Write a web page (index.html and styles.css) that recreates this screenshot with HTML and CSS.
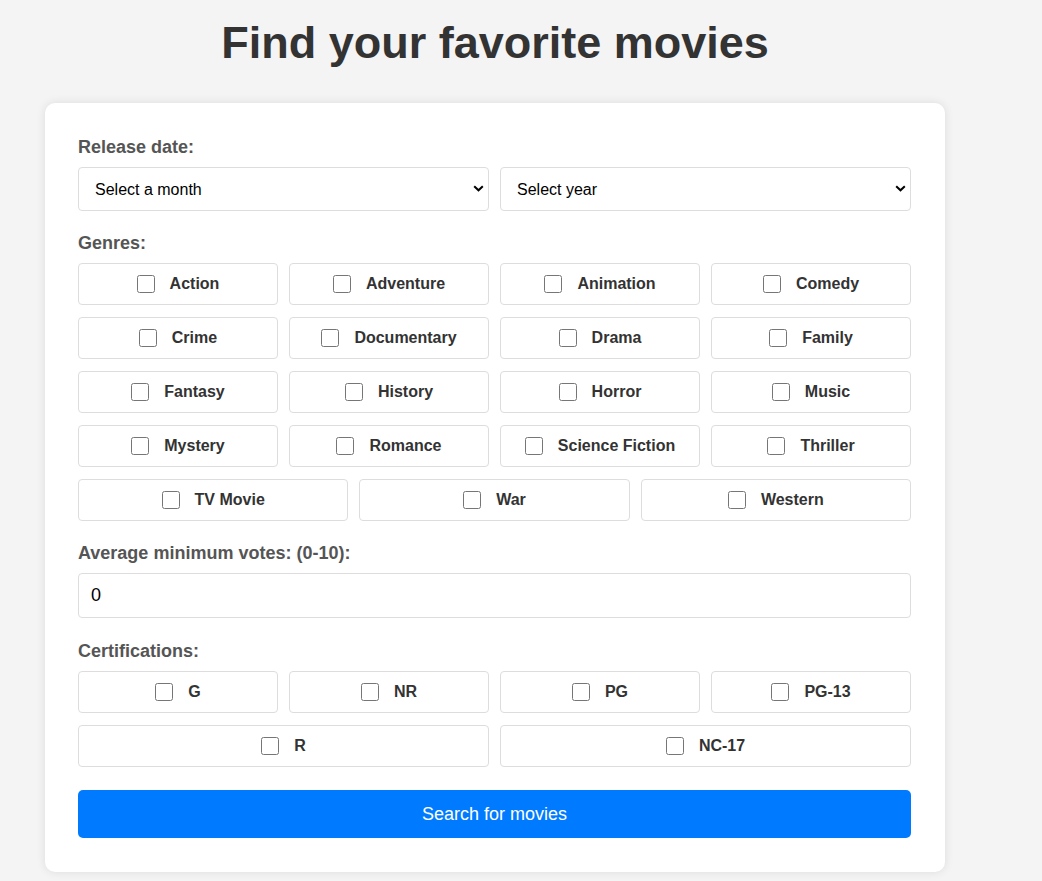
FILE: index.html
```html
<!DOCTYPE html>
<html lang="en">
<head>
<meta charset="utf-8">
<title>Find your favorite movies</title>
<link rel="stylesheet" href="styles.css">
</head>
<body>
<div class="page">
  <h1 class="title">Find your favorite movies</h1>
  <form class="card">
    <div class="section">
      <label class="field-label">Release date:</label>
      <div class="select-row">
        <div class="select-wrap">
          <select class="select"><option>Select a month</option></select>
          <svg class="chevron" viewBox="0 0 11 7"><path d="M1.2 1.2 L5.5 5.3 L9.8 1.2" fill="none" stroke="#000" stroke-width="2"/></svg>
        </div>
        <div class="select-wrap">
          <select class="select"><option>Select year</option></select>
          <svg class="chevron" viewBox="0 0 11 7"><path d="M1.2 1.2 L5.5 5.3 L9.8 1.2" fill="none" stroke="#000" stroke-width="2"/></svg>
        </div>
      </div>
    </div>

    <div class="section">
      <label class="field-label">Genres:</label>
      <div class="options">
        <label class="option"><input type="checkbox"><span>Action</span></label>
        <label class="option"><input type="checkbox"><span>Adventure</span></label>
        <label class="option"><input type="checkbox"><span>Animation</span></label>
        <label class="option"><input type="checkbox"><span>Comedy</span></label>
        <label class="option"><input type="checkbox"><span>Crime</span></label>
        <label class="option"><input type="checkbox"><span>Documentary</span></label>
        <label class="option"><input type="checkbox"><span>Drama</span></label>
        <label class="option"><input type="checkbox"><span>Family</span></label>
        <label class="option"><input type="checkbox"><span>Fantasy</span></label>
        <label class="option"><input type="checkbox"><span>History</span></label>
        <label class="option"><input type="checkbox"><span>Horror</span></label>
        <label class="option"><input type="checkbox"><span>Music</span></label>
        <label class="option"><input type="checkbox"><span>Mystery</span></label>
        <label class="option"><input type="checkbox"><span>Romance</span></label>
        <label class="option"><input type="checkbox"><span>Science Fiction</span></label>
        <label class="option"><input type="checkbox"><span>Thriller</span></label>
        <label class="option"><input type="checkbox"><span>TV Movie</span></label>
        <label class="option"><input type="checkbox"><span>War</span></label>
        <label class="option"><input type="checkbox"><span>Western</span></label>
      </div>
    </div>

    <div class="section section-input">
      <label class="field-label">Average minimum votes: (0-10):</label>
      <input class="number" type="number" value="0" min="0" max="10">
    </div>

    <div class="section section-last">
      <label class="field-label">Certifications:</label>
      <div class="options">
        <label class="option"><input type="checkbox"><span>G</span></label>
        <label class="option"><input type="checkbox"><span>NR</span></label>
        <label class="option"><input type="checkbox"><span>PG</span></label>
        <label class="option"><input type="checkbox"><span>PG-13</span></label>
        <label class="option"><input type="checkbox"><span>R</span></label>
        <label class="option"><input type="checkbox"><span>NC-17</span></label>
      </div>
    </div>

    <button class="submit" type="button">Search for movies</button>
  </form>
</div>
</body>
</html>
```

FILE: styles.css
```css
html, body {
  margin: 0;
  padding: 0;
}

body {
  background: #f4f4f4;
  font-family: "Liberation Sans", Arial, sans-serif;
}

.page {
  width: 990px;
  padding-bottom: 30px;
}

.title {
  margin: 17px 0 34px;
  font-size: 45px;
  line-height: 52px;
  font-weight: bold;
  color: #333;
  text-align: center;
}

.card {
  width: 900px;
  box-sizing: border-box;
  margin: 0 auto;
  background: #fff;
  border-radius: 10px;
  padding: 34px 34px 34px 33px;
  box-shadow: 0 0 10px rgba(0, 0, 0, 0.1);
}

.section {
  margin-bottom: 22px;
}

.section-input {
  margin-bottom: 23px;
}

.section-last {
  margin-bottom: 23px;
}

.field-label {
  display: block;
  font-size: 18px;
  line-height: 20px;
  font-weight: bold;
  color: #555;
  margin-bottom: 10px;
}

.select-row {
  display: flex;
  gap: 11px;
}

.select-wrap {
  position: relative;
  flex: 1 1 0;
}

.select {
  display: block;
  width: 100%;
  height: 44px;
  box-sizing: border-box;
  -webkit-appearance: none;
  appearance: none;
  border: 1px solid #ddd;
  border-radius: 4px;
  padding: 0 16px;
  background: #fff;
  color: #000;
  font-family: "Liberation Sans", Arial, sans-serif;
  font-size: 16px;
}

.chevron {
  position: absolute;
  right: 5px;
  top: 18px;
  width: 11px;
  height: 7px;
  pointer-events: none;
}

.options {
  display: flex;
  flex-wrap: wrap;
  gap: 12px 11px;
}

.option {
  flex: 1 1 180px;
  height: 42px;
  box-sizing: border-box;
  border: 1px solid #ddd;
  border-radius: 4px;
  background: #fff;
  display: flex;
  align-items: center;
  justify-content: center;
  font-size: 16px;
  font-weight: bold;
  color: #333;
}

.option input {
  width: 18px;
  height: 18px;
  margin: 0 15px 0 0;
}

.number {
  display: block;
  width: 100%;
  height: 45px;
  box-sizing: border-box;
  border: 1px solid #ddd;
  border-radius: 4px;
  padding: 0 12px;
  background: #fff;
  color: #000;
  font-family: "Liberation Sans", Arial, sans-serif;
  font-size: 18px;
}

.number::-webkit-inner-spin-button,
.number::-webkit-outer-spin-button {
  -webkit-appearance: none;
  margin: 0;
}

.submit {
  display: block;
  width: 100%;
  height: 48px;
  border: none;
  border-radius: 5px;
  background: #007bff;
  color: #fff;
  font-family: "Liberation Sans", Arial, sans-serif;
  font-size: 18px;
  cursor: pointer;
}
```
